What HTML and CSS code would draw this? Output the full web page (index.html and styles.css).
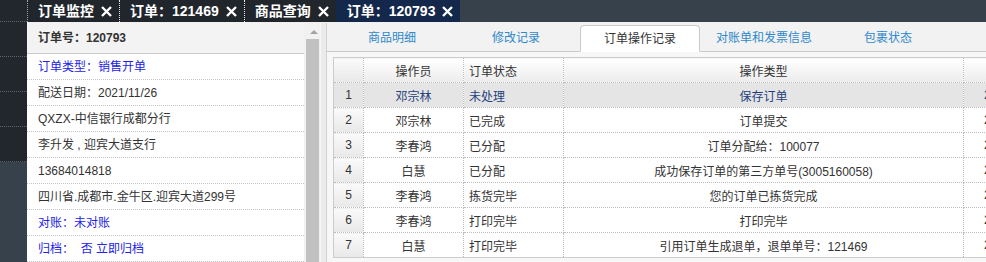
FILE: index.html
```html
<!DOCTYPE html>
<html lang="zh-CN">
  <head>
    <meta charset="UTF-8" />
    <meta name="viewport" content="width=device-width, initial-scale=1.0" />
    <title>订单：120793</title>
    <link rel="stylesheet" href="styles.css">
  </head>
  <body>
    <div class="sidebar">
      <div class="side-top">
        <div class="side-item first"></div>
        <div class="side-item"></div>
        <div class="side-item"></div>
        <div class="side-item"></div>
        <div class="side-item"></div>
      </div>
    </div>

    <div class="main">
      <div class="topbar">
        <div class="page-tab">
          <span>订单监控</span>
          <svg class="close" viewBox="0 0 11 11"><path d="M1 1 L10 10 M10 1 L1 10" /></svg>
        </div>
        <div class="page-tab">
          <span>订单：121469</span>
          <svg class="close" viewBox="0 0 11 11"><path d="M1 1 L10 10 M10 1 L1 10" /></svg>
        </div>
        <div class="page-tab">
          <span>商品查询</span>
          <svg class="close" viewBox="0 0 11 11"><path d="M1 1 L10 10 M10 1 L1 10" /></svg>
        </div>
        <div class="page-tab active">
          <span>订单：120793</span>
          <svg class="close" viewBox="0 0 11 11"><path d="M1 1 L10 10 M10 1 L1 10" /></svg>
        </div>
      </div>

      <div class="content">
        <div class="order-panel">
          <div class="order-head">订单号：120793</div>
          <div class="order-row link">订单类型：销售开单</div>
          <div class="order-row">配送日期：2021/11/26</div>
          <div class="order-row">QXZX-中信银行成都分行</div>
          <div class="order-row">李升发 , 迎宾大道支行</div>
          <div class="order-row">13684014818</div>
          <div class="order-row">四川省.成都市.金牛区.迎宾大道299号</div>
          <div class="order-row link">对账：未对账</div>
          <div class="order-row link">归档：&nbsp; 否 立即归档</div>
        </div>
        <div class="scrollbar">
          <div class="arrow-up"></div>
          <div class="thumb"></div>
        </div>
        <div class="splitter"></div>

        <div class="detail">
          <div class="detail-tabs">
            <div class="detail-tab">商品明细</div>
            <div class="detail-tab">修改记录</div>
            <div class="detail-tab active">订单操作记录</div>
            <div class="detail-tab">对账单和发票信息</div>
            <div class="detail-tab">包裹状态</div>
          </div>
          <div class="detail-body">
            <table class="log-table">
              <colgroup>
                <col style="width: 30px" />
                <col style="width: 100px" />
                <col style="width: 100px" />
                <col style="width: 400px" />
                <col style="width: 150px" />
              </colgroup>
              <thead>
                <tr>
                  <th class="num"></th>
                  <th>操作员</th>
                  <th class="left">订单状态</th>
                  <th>操作类型</th>
                  <th>操作时间</th>
                </tr>
              </thead>
              <tbody id="logBody"></tbody>
            </table>
          </div>
        </div>
      </div>
    </div>

    <script>
      const logs = [
        { user: "邓宗林", status: "未处理", action: "保存订单", time: "2021/11/26 09:12:05" },
        { user: "邓宗林", status: "已完成", action: "订单提交", time: "2021/11/26 09:12:41" },
        { user: "李春鸿", status: "已分配", action: "订单分配给：100077", time: "2021/11/26 09:30:18" },
        { user: "白慧", status: "已分配", action: "成功保存订单的第三方单号(3005160058)", time: "2021/11/26 09:45:02" },
        { user: "李春鸿", status: "拣货完毕", action: "您的订单已拣货完成", time: "2021/11/26 10:20:37" },
        { user: "李春鸿", status: "打印完毕", action: "打印完毕", time: "2021/11/26 10:21:10" },
        { user: "白慧", status: "打印完毕", action: "引用订单生成退单，退单单号：121469", time: "2021/11/26 14:03:55" },
      ];

      const tbody = document.getElementById("logBody");
      logs.forEach((log, i) => {
        const row = document.createElement("tr");
        if (i === 0) row.className = "selected";
        row.innerHTML = `
          <td class="num">${i + 1}</td>
          <td>${log.user}</td>
          <td class="left">${log.status}</td>
          <td>${log.action}</td>
          <td>${log.time}</td>`;
        tbody.appendChild(row);
      });
    </script>
  </body>
</html>
```

FILE: styles.css
```css
body {
  margin: 0;
  height: 262px;
  overflow: hidden;
  display: flex;
  font-family: "Liberation Sans", "Noto Sans CJK SC", sans-serif;
  font-size: 12px;
  color: #333;
  background-color: #f0f0f0;
}

.sidebar {
  width: 27px;
  flex-shrink: 0;
  background-color: #36414c;
}

.side-top {
  background-color: #22272e;
}

.side-item {
  height: 34px;
  border-bottom: 1px dotted #5c6470;
}

.side-item.first {
  height: 21px;
}

.main {
  flex: 1;
  display: flex;
  flex-direction: column;
  min-width: 0;
}

.topbar {
  height: 22px;
  display: flex;
  background-color: #36414c;
}

.page-tab {
  display: flex;
  align-items: center;
  gap: 7px;
  padding: 0 7px 0 10px;
  border-left: 1px dotted #e8e8e8;
  background-color: #21262d;
  color: #fff;
  font-size: 14px;
  font-weight: bold;
  line-height: 22px;
}

.page-tab:first-child {
  border-left-color: #9aa0a8;
}

.page-tab.active {
  background-color: #13284b;
  border-left: 1px solid #13284b;
}

.close {
  width: 11px;
  height: 11px;
  stroke: #fff;
  stroke-width: 2.4;
  fill: none;
}

.content {
  flex: 1;
  display: flex;
  padding-top: 1px;
  min-height: 0;
}

.order-panel {
  width: 277px;
  background-color: #fff;
}

.order-head {
  height: 30px;
  line-height: 30px;
  padding-left: 11px;
  background-color: #f3f3f3;
  border-bottom: 1px solid #cdcdcd;
  font-weight: bold;
}

.order-row {
  height: 25px;
  line-height: 26px;
  padding-left: 11px;
  border-bottom: 1px dotted #c4c4c4;
  white-space: nowrap;
}

.order-row.link {
  color: #2323e6;
}

.scrollbar {
  width: 16px;
  display: flex;
  flex-direction: column;
  background-color: #f1f1f1;
}

.arrow-up {
  width: 0;
  height: 0;
  margin: 7px auto 0 6px;
  border-left: 4px solid transparent;
  border-right: 4px solid transparent;
  border-bottom: 4px solid #a3a3a3;
}

.thumb {
  flex: 1;
  margin: 5px 1px 0 2px;
  background-color: #c1c1c1;
}

.splitter {
  width: 5px;
  border-left: 1px solid #f7f7f7;
  background-color: #ebebeb;
}

.detail {
  flex: 1;
  display: flex;
  flex-direction: column;
  min-width: 0;
  overflow: hidden;
  border-left: 1px solid #d2d2d2;
  background-color: #f7f7f7;
}

.detail-tabs {
  height: 26px;
  display: flex;
  align-items: flex-end;
  gap: 4px;
  padding: 2px 0 0 5px;
  background-color: #f2f2f2;
  border-bottom: 1px solid #cacaca;
}

.detail-tab {
  width: 120px;
  height: 26px;
  line-height: 26px;
  text-align: center;
  color: #2f88cc;
  flex-shrink: 0;
}

.detail-tab.active {
  height: 27px;
  margin-bottom: -1px;
  background-color: #fff;
  color: #333;
  border: 1px solid #cacaca;
  border-bottom: 1px solid #fff;
  border-radius: 4px 4px 0 0;
  box-sizing: border-box;
}

.detail-body {
  flex: 1;
  padding: 5px 6px;
}

.log-table {
  width: 780px;
  table-layout: fixed;
  border-collapse: collapse;
  background-color: #fff;
  border: 1px solid #cccccc;
}

.log-table th,
.log-table td {
  height: 24px;
  padding: 0 5px;
  border: 1px dotted #bdbdbd;
  text-align: center;
  white-space: nowrap;
  overflow: hidden;
  font-weight: normal;
}

.log-table th {
  background: linear-gradient(#ffffff, #ececec);
}

.log-table .left {
  text-align: left;
}

.log-table .num {
  background: linear-gradient(#fafafa, #e8e8e8);
}

.log-table tr.selected td {
  background: #e5e5e5;
  color: #24407c;
}

.log-table tr.selected td.num {
  color: #333;
}
```
